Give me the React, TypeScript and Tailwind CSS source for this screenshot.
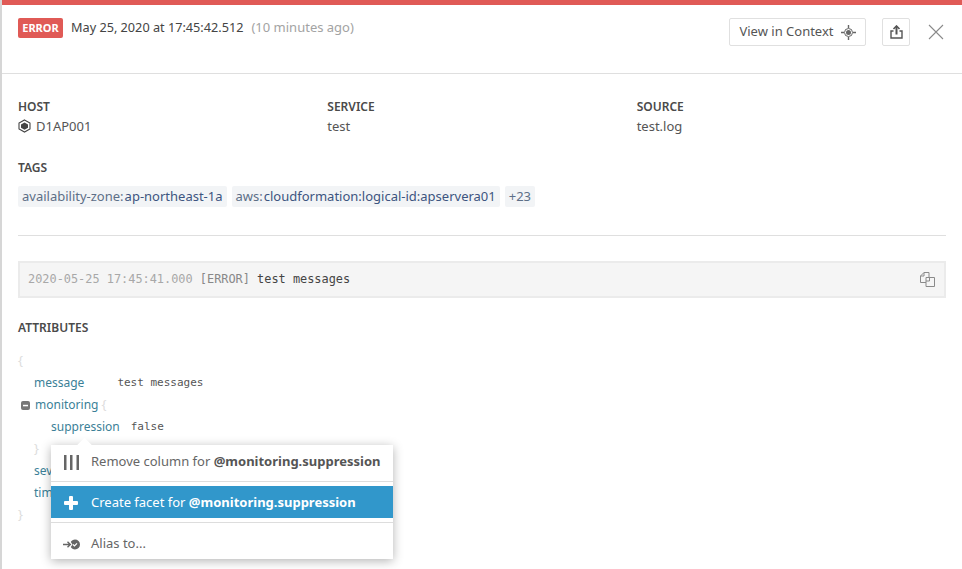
import React from 'react';

const sans = { fontFamily: '"Noto Sans", "Open Sans", sans-serif' };

function Label({ children }: { children: React.ReactNode }) {
  return <div className="text-[12px] leading-[16px] font-semibold text-[#4a4a4a]">{children}</div>;
}

function Tag({ k, v }: { k: string; v: string }) {
  return (
    <span className="h-[21px] px-[4px] flex items-center rounded-[2px] bg-[#f2f4f6] text-[13px] whitespace-nowrap">
      <span className="text-[#5d6f87]">{k}</span>
      {v && <span className="ml-[1px] text-[#3d5580]">{v}</span>}
    </span>
  );
}

function JsonRow({ indent, children }: { indent: string; children: React.ReactNode }) {
  return <div className={`h-[22px] flex items-center whitespace-nowrap ${indent}`}>{children}</div>;
}

const keyCls = 'text-[12px] text-[#3b7f97]';
const monoCls = "font-['DejaVu_Sans_Mono',monospace] text-[11px] text-[#555555]";
const braceCls = 'text-[13px] text-[#dddddd]';

function ContextMenu() {
  return (
    <div className="absolute left-[33px] top-[95px] w-[342px] h-[114px] bg-white shadow-[0_2px_10px_rgba(0,0,0,0.3)] text-[13px] text-[#666666]">
      <div className="absolute left-[28px] -top-[5px] w-[11px] h-[11px] rotate-45 bg-white" />
      <div className="relative h-[37px] pb-[2px] flex items-center border-b border-[#dddddd]">
        <svg className="ml-[13px] w-[15px] h-[15px]" viewBox="0 0 15 15" fill="#666666">
          <rect x="0" y="0" width="2.500" height="15" />
          <rect x="6" y="0" width="2.500" height="15" />
          <rect x="12.500" y="0" width="2.500" height="15" />
        </svg>
        <span className="ml-[12px] whitespace-nowrap">
          Remove column for <b className="font-bold text-[#555555]">@monitoring.suppression</b>
        </span>
      </div>
      <div className="h-[32px] mt-[4px] pt-[2px] flex items-center bg-[#3197cb] text-white">
        <svg className="ml-[13px] w-[14px] h-[14px]" viewBox="0 0 14 14" fill="#ffffff">
          <rect x="5" y="0" width="4" height="14" rx="1" />
          <rect x="0" y="5" width="14" height="4" rx="1" />
        </svg>
        <span className="ml-[13px] whitespace-nowrap">
          Create facet for <b className="font-bold">@monitoring.suppression</b>
        </span>
      </div>
      <div className="h-[37px] mt-[4px] pt-[6px] flex items-center border-t border-[#dddddd]">
        <svg className="ml-[12px] w-[17px] h-[13px]" viewBox="0 0 17 12" fill="none">
          <path d="M0 6h7M4.500 3.200 7.300 6 4.500 8.800" stroke="#666666" strokeWidth="1.400" />
          <path d="M12 1a5 5 0 1 1 0 10c-1.800 0-3.400-1-4.200-2.500L9.500 6 7.800 3.500C8.600 2 10.200 1 12 1Z" fill="#666666" />
          <path d="m10 6 1.500 1.500L14 4.800" stroke="#ffffff" strokeWidth="1.200" />
        </svg>
        <span className="ml-[11px]">Alias to...</span>
      </div>
    </div>
  );
}

export default function App() {
  return (
    <div className="w-[962px] h-[569px] overflow-hidden bg-white relative border-l-2 border-[#d6d6d6]" style={sans}>
      <div className="h-[5px] bg-[#e05a56]" />

      <header className="h-[69px] pl-[16px] pr-[18px] pt-[13px] flex items-start border-b border-[#dfdfdf]">
        <span className="h-[20px] w-[45px] flex items-center justify-center rounded-[2px] bg-[#e05a56] text-white text-[11px] font-bold">
          ERROR
        </span>
        <span className="ml-[8px] text-[12.700px] leading-[19px] text-[#444444]">May 25, 2020 at 17:45:42.512</span>
        <span className="ml-[8px] text-[13px] leading-[19px] text-[#a3a3a3]">(10 minutes ago)</span>

        <button className="ml-auto h-[28px] w-[137px] flex items-center justify-center gap-[7px] border border-[#e0e0e0] rounded-[2px] text-[13px] text-[#555555]">
          View in Context
          <svg className="w-[15px] h-[15px]" viewBox="0 0 15 15" fill="none" stroke="#666666">
            <circle cx="7.500" cy="7.500" r="4" />
            <circle cx="7.500" cy="7.500" r="2.500" fill="#666666" stroke="none" />
            <path d="M7.500 0v3M7.500 12v3M0 7.500h3M12 7.500h3" strokeWidth="1.400" />
          </svg>
        </button>
        <button className="ml-[16px] w-[28px] h-[28px] flex items-center justify-center border border-[#e0e0e0] rounded-[2px]">
          <svg className="w-[13px] h-[14px]" viewBox="0 0 13 14" fill="none" stroke="#555555" strokeWidth="1.400">
            <path d="M3.500 6H1v7h11V6H9.500" />
            <path d="M6.500 9.500V1.500" strokeWidth="2" />
            <path d="M3.500 4 6.500 1l3 3" strokeWidth="1.600" />
          </svg>
        </button>
        <button className="ml-[18px] mt-[6px] w-[16px] h-[16px]">
          <svg className="w-[16px] h-[16px]" viewBox="0 0 16 16" fill="none" stroke="#8a8a8a" strokeWidth="1.100">
            <path d="M1 1l14 14M15 1 1 15" />
          </svg>
        </button>
      </header>

      <main className="relative pl-[16px] pr-[16px]">
        <div className="grid grid-cols-3 pt-[25px]">
          <div>
            <Label>HOST</Label>
            <div className="mt-[1px] flex items-center gap-[5px] text-[13px] leading-[20px] text-[#555555]">
              <svg className="w-[13px] h-[14px]" viewBox="0 0 13 14" fill="none">
                <path d="M6.500 1 12 4v6l-5.500 3L1 10V4Z" stroke="#444444" strokeWidth="1.100" />
                <path d="M6.500 3.500 10 5.400v3.400l-3.500 1.900L3 8.800V5.400Z" fill="#444444" />
              </svg>
              D1AP001
            </div>
          </div>
          <div>
            <Label>SERVICE</Label>
            <div className="mt-[1px] text-[13px] leading-[20px] text-[#555555]">test</div>
          </div>
          <div>
            <Label>SOURCE</Label>
            <div className="mt-[1px] text-[13px] leading-[20px] text-[#555555]">test.log</div>
          </div>
        </div>

        <div className="mt-[24px]">
          <Label>TAGS</Label>
        </div>
        <div className="mt-[10px] flex gap-[5px]">
          <Tag k="availability-zone:" v="ap-northeast-1a" />
          <Tag k="aws:" v="cloudformation:logical-id:apservera01" />
          <Tag k="+23" v="" />
        </div>

        <div className="mt-[28px] border-t border-[#dfdfdf]" />

        <div className="mt-[25px] h-[37px] pl-[8px] pr-[9px] flex items-center justify-between bg-[#f5f5f5] border-2 border-[#ebebeb] font-['DejaVu_Sans_Mono',monospace] text-[11.900px]">
          <span className="whitespace-pre">
            <span className="text-[#a8a8a8]">2020-05-25 17:45:41.000</span>
            <span className="text-[#888888]"> [ERROR]</span>
            <span className="text-[#444444]"> test messages</span>
          </span>
          <svg className="w-[15px] h-[15px]" viewBox="0 0 15 15" fill="none" stroke="#8a8a8a">
            <path d="M6 10.500H.5V4L4 .5h5V5" />
            <path d="M.5 4H4V.5" />
            <path d="M6 5.500h8.500v9H6Z" fill="#f5f5f5" />
            <path d="M9.500 5.500V9H6" />
          </svg>
        </div>

        <div className="mt-[22px]">
          <Label>ATTRIBUTES</Label>
        </div>

        <div className="relative mt-[14px]">
          <JsonRow indent="pl-0"><span className={braceCls}>{'{'}</span></JsonRow>
          <JsonRow indent="pl-[16px]">
            <span className={keyCls}>message</span>
            <span className={`${monoCls} ml-[33px]`}>test messages</span>
          </JsonRow>
          <JsonRow indent="pl-[3px]">
            <svg className="w-[9px] h-[9px] mr-[5px]" viewBox="0 0 9 9">
              <rect width="9" height="9" rx="2" fill="#777777" />
              <rect x="2" y="3.800" width="5" height="1.500" fill="#ffffff" />
            </svg>
            <span className={keyCls}>monitoring</span>
            <span className={`${braceCls} ml-[3px]`}>{'{'}</span>
          </JsonRow>
          <JsonRow indent="pl-[33px]">
            <span className={keyCls}>suppression</span>
            <span className={`${monoCls} ml-[11px]`}>false</span>
          </JsonRow>
          <JsonRow indent="pl-[16px]"><span className={braceCls}>{'}'}</span></JsonRow>
          <JsonRow indent="pl-[16px]"><span className={keyCls}>severity</span></JsonRow>
          <JsonRow indent="pl-[16px]"><span className={keyCls}>timestamp</span></JsonRow>
          <JsonRow indent="pl-0"><span className={braceCls}>{'}'}</span></JsonRow>
          <ContextMenu />
        </div>
      </main>
    </div>
  );
}
